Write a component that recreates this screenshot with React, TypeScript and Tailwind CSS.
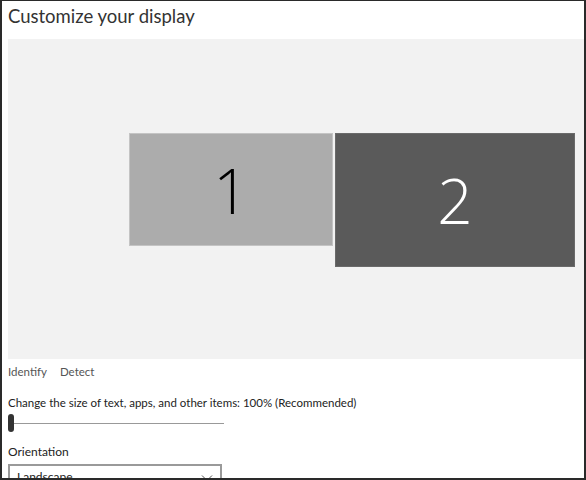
import React from "react";

export default function App() {
  return (
    <div className="w-[586px] h-[480px] overflow-hidden bg-white">
      <div
        className="w-[586px] h-[480px] border-t border-l-2 border-r-2 border-b-2 border-[#2a2a2a] bg-white overflow-hidden flex flex-col"
        style={{ fontFamily: 'Lato, "Noto Sans", sans-serif' }}
      >
        <div className="pl-[6px] h-[38px] shrink-0 text-[18.5px] leading-[28px] pt-[1px] text-[#333333]">
          Customize your display
        </div>
        <div className="ml-[6px] h-[320px] bg-[#f2f2f2] relative shrink-0">
          <div className="absolute left-[121px] top-[94px] w-[204px] h-[113px] bg-[#acacac] border border-[#c4c4c4] flex items-center justify-center">
            <span
              className="text-[62px] leading-none text-black font-light"
              style={{ fontFamily: '"Open Sans", "Noto Sans", sans-serif' }}
            >
              1
            </span>
          </div>
          <div className="absolute left-[327px] top-[94px] w-[240px] h-[134px] bg-[#5a5a5a] border border-[#6a6a6a] flex items-center justify-center">
            <span
              className="text-[62px] leading-none text-white font-light"
              style={{ fontFamily: '"Open Sans", "Noto Sans", sans-serif' }}
            >
              2
            </span>
          </div>
        </div>
        <div className="pl-[6px] shrink-0 flex gap-[13px] text-[11.5px] leading-[16px] text-[#555555] mt-[5px]">
          <span>Identify</span>
          <span>Detect</span>
        </div>
        <div className="pl-[6px] shrink-0 mt-[15px] text-[11.5px] leading-[16px] text-[#222222]">
          Change the size of text, apps, and other items: 100% (Recommended)
        </div>
        <div className="pl-[6px] shrink-0 mt-[2px] h-[20px] flex items-center w-[222px]">
          <div className="w-[6px] h-[18px] rounded-[3px] bg-[#333333] shrink-0" />
          <div className="flex-1 h-[1px] bg-[#999999]" />
        </div>
        <div className="pl-[6px] shrink-0 mt-[11px] text-[12px] leading-[16px] text-[#222222]">
          Orientation
        </div>
        <div className="ml-[6px] mt-[4px] w-[214px] h-[32px] border-2 border-[#9a9a9a] flex items-start justify-between px-[7px] pt-[3px] text-[12px] text-[#222222] shrink-0">
          <span className="leading-[16px]">Landscape</span>
          <svg width="12" height="12" viewBox="0 0 12 12" className="mt-[3px]">
            <path d="M1 3.5 L6 8.5 L11 3.5" fill="none" stroke="#555" strokeWidth="1" />
          </svg>
        </div>
      </div>
    </div>
  );
}
